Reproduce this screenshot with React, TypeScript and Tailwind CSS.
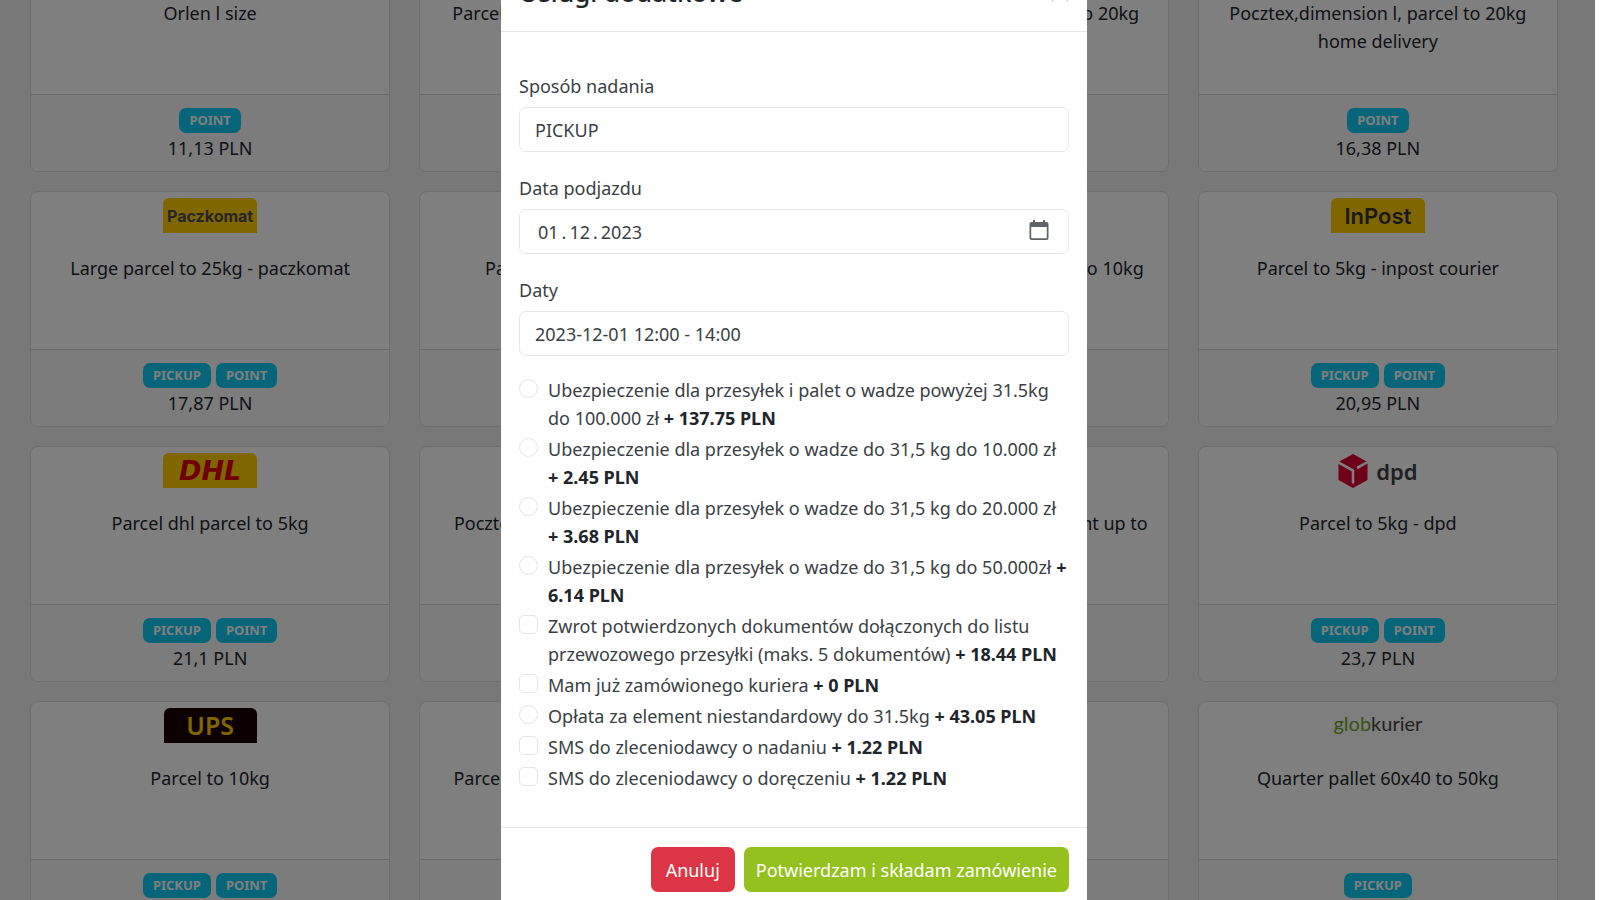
import { useState } from "react";
import type { ReactNode } from "react";

type Offer = {
  logo: ReactNode;
  name: string;
  badges: string[];
  price: string;
};

type Service = {
  id: string;
  type: "radio" | "checkbox";
  label: string;
  price: string;
};

const yellowLogo =
  "flex h-[35px] w-[94px] items-center justify-center rounded-t-md bg-[#ffcc00] whitespace-nowrap";

const PaczkomatLogo = () => (
  <div className={yellowLogo}>
    <span className="font-['Inter',sans-serif] text-[16px] leading-[34px] font-bold text-[#4a4a4a]">
      Paczkomat
    </span>
  </div>
);

const InPostLogo = () => (
  <div className={yellowLogo}>
    <span className="font-['Inter',sans-serif] text-[22px] leading-[36px] font-semibold text-[#333333]">
      InPost
    </span>
  </div>
);

const DhlLogo = () => (
  <div className={yellowLogo}>
    <span className="font-['DejaVu_Sans',sans-serif] text-[27px] leading-[34px] font-bold text-[#e00000] italic">
      DHL
    </span>
  </div>
);

const UpsLogo = () => (
  <div className="flex h-[35px] w-[93px] items-center justify-center rounded-t-md bg-[#180000]">
    <span className="text-[25px] leading-[35px] font-semibold text-[#ffcc00]">UPS</span>
  </div>
);

const DpdLogo = () => (
  <div className="flex h-[35px] items-center gap-2">
    <svg width="30" height="34" viewBox="0 0 30 34">
      <path d="M15 0 29.500 8V26L15 34 0.5 26V8Z" fill="#dc0032" />
      <path d="M0 8.200 15 16.500V29.500M19 14 30 7.800" fill="none" stroke="#ffffff" strokeWidth="2.6" />
    </svg>
    <span className="text-[22px] leading-[34px] font-semibold text-[#414042]">dpd</span>
  </div>
);

const GlobkurierLogo = () => (
  <div className="flex h-[35px] w-[94px] items-start justify-center bg-[#fdfdfd]">
    <span className="font-['Lato',sans-serif] text-[20px] leading-[30px] text-[#444444]">
      <span className="text-[#6fa52c]">glob</span>kurier
    </span>
  </div>
);

const offers: Offer[] = [
  { logo: <PaczkomatLogo />, name: "Orlen l size", badges: ["POINT"], price: "11,13 PLN" },
  { logo: <DpdLogo />, name: "Parcel pickup dpd point up to 20kg", badges: ["POINT"], price: "14,15 PLN" },
  { logo: <InPostLogo />, name: "Pocztex,dimension s, parcel to 20kg", badges: ["POINT"], price: "15,38 PLN" },
  { logo: <InPostLogo />, name: "Pocztex,dimension l, parcel to 20kg home delivery", badges: ["POINT"], price: "16,38 PLN" },
  { logo: <PaczkomatLogo />, name: "Large parcel to 25kg - paczkomat", badges: ["PICKUP", "POINT"], price: "17,87 PLN" },
  { logo: <DpdLogo />, name: "Parcel to 10kg - dpd pickup", badges: ["POINT"], price: "18,45 PLN" },
  { logo: <DhlLogo />, name: "Parcel dhl pop from point up to 10kg", badges: ["POINT"], price: "19,90 PLN" },
  { logo: <InPostLogo />, name: "Parcel to 5kg - inpost courier", badges: ["PICKUP", "POINT"], price: "20,95 PLN" },
  { logo: <DhlLogo />, name: "Parcel dhl parcel to 5kg", badges: ["PICKUP", "POINT"], price: "21,1 PLN" },
  { logo: <InPostLogo />, name: "Pocztex,dimension s, parcel to 5kg", badges: ["POINT"], price: "21,9 PLN" },
  { logo: <DpdLogo />, name: "Parcel from its dpd pickup point up to 10kg", badges: ["POINT"], price: "22,5 PLN" },
  { logo: <DpdLogo />, name: "Parcel to 5kg - dpd", badges: ["PICKUP", "POINT"], price: "23,7 PLN" },
  { logo: <UpsLogo />, name: "Parcel to 10kg", badges: ["PICKUP", "POINT"], price: "24,2 PLN" },
  { logo: <InPostLogo />, name: "Parcel up to 9kg - courier standard", badges: ["POINT"], price: "25,1 PLN" },
  { logo: <UpsLogo />, name: "Parcel to 20kg", badges: ["POINT"], price: "26,4 PLN" },
  { logo: <GlobkurierLogo />, name: "Quarter pallet 60x40 to 50kg", badges: ["PICKUP"], price: "98,4 PLN" },
];

const services: Service[] = [
  { id: "ins-100", type: "radio", label: "Ubezpieczenie dla przesyłek i palet o wadze powyżej 31.5kg do 100.000 zł", price: "137.75" },
  { id: "ins-10", type: "radio", label: "Ubezpieczenie dla przesyłek o wadze do 31,5 kg do 10.000 zł", price: "2.45" },
  { id: "ins-20", type: "radio", label: "Ubezpieczenie dla przesyłek o wadze do 31,5 kg do 20.000 zł", price: "3.68" },
  { id: "ins-50", type: "radio", label: "Ubezpieczenie dla przesyłek o wadze do 31,5 kg do 50.000zł", price: "6.14" },
  { id: "rod", type: "checkbox", label: "Zwrot potwierdzonych dokumentów dołączonych do listu przewozowego przesyłki (maks. 5 dokumentów)", price: "18.44" },
  { id: "own", type: "checkbox", label: "Mam już zamówionego kuriera", price: "0" },
  { id: "nst", type: "radio", label: "Opłata za element niestandardowy do 31.5kg", price: "43.05" },
  { id: "sms-send", type: "checkbox", label: "SMS do zleceniodawcy o nadaniu", price: "1.22" },
  { id: "sms-recv", type: "checkbox", label: "SMS do zleceniodawcy o doręczeniu", price: "1.22" },
];

function OfferCard({ offer }: { offer: Offer }) {
  return (
    <article className="flex h-[236px] flex-col overflow-hidden rounded-lg border border-[#dcdcdc] bg-white text-center">
      <div className="flex flex-1 flex-col items-center gap-[21px] px-[18px] pt-[6px]">
        {offer.logo}
        <h3>{offer.name}</h3>
      </div>
      <div className="flex h-[77px] flex-col items-center border-t border-[#d5d5d5] bg-[#f9f9f9] pt-[13px]">
        <div className="flex gap-[5px]">
          {offer.badges.map((badge) => (
            <span
              key={badge}
              className="rounded-[7px] bg-[#0dcaf0] px-[10px] text-[13px] leading-[25px] font-bold text-white"
            >
              {badge}
            </span>
          ))}
        </div>
        <p className="pt-px">{offer.price}</p>
      </div>
    </article>
  );
}

const fieldClass =
  "h-[45px] w-full appearance-none rounded-[7px] border border-[#e5e8eb] bg-white px-[15px] text-[#3a3f44] outline-none";

function Field({ id, label, children }: { id: string; label: string; children: ReactNode }) {
  return (
    <div className="flex flex-col gap-[7px]">
      <label htmlFor={id}>{label}</label>
      {children}
    </div>
  );
}

function ServicesModal() {
  const [date, setDate] = useState("01\u2009.\u200912\u2009.\u20092023");

  return (
    <section
      role="dialog"
      aria-labelledby="modal-title"
      className="-mt-[47px] h-max w-[586px] shrink-0 rounded-lg bg-white text-[#3a3f44]"
    >
      <header className="flex items-center justify-between border-b border-[#e5e8eb] p-[18px]">
        <h2 id="modal-title" className="text-[26px] leading-[42px] font-medium text-[#212529]">
          Usługi dodatkowe
        </h2>
        <button type="button" aria-label="Zamknij" className="text-[#808080]">
          <svg width="18" height="18" viewBox="0 0 20 20" stroke="currentColor" strokeWidth="2">
            <path d="M1 1 19 19M19 1 1 19" />
          </svg>
        </button>
      </header>

      <div className="px-[18px] pt-10 pb-[35px]">
        <div className="flex flex-col gap-[22px]">
          <Field id="method" label="Sposób nadania">
            <select id="method" className={fieldClass}>
              <option>PICKUP</option>
            </select>
          </Field>
          <Field id="date" label="Data podjazdu">
            <div className="relative">
              <input
                id="date"
                value={date}
                onChange={(e) => setDate(e.target.value)}
                className={`${fieldClass} pl-[18px]`}
              />
              <button
                type="button"
                aria-label="Wybierz datę"
                className="absolute top-[11px] right-5 text-[#606468]"
              >
                <svg width="20" height="20" viewBox="0 0 20 20" fill="currentColor">
                  <path
                    fillRule="evenodd"
                    d="M4 0h2v2h8V0h2v2h1.500A2 2 0 0 1 19.500 4v14a2 2 0 0 1-2 2h-15a2 2 0 0 1-2-2V4a2 2 0 0 1 2-2H4ZM2.200 7v10.500a.8.8 0 0 0 .8.8h14a.8.8 0 0 0 .8-.8V7Z"
                  />
                </svg>
              </button>
            </div>
          </Field>
          <Field id="hours" label="Daty">
            <select id="hours" className={fieldClass}>
              <option>2023-12-01 12:00 - 14:00</option>
            </select>
          </Field>
        </div>

        <ul className="flex flex-col gap-[3px] pt-5">
          {services.map((s) => (
            <li key={s.id} className="flex gap-[10px]">
              <input
                id={s.id}
                type={s.type}
                name={s.type === "radio" ? "service" : s.id}
                className={`mt-[3px] size-[19px] shrink-0 appearance-none border border-[#e2e5e9] bg-white ${
                  s.type === "radio" ? "rounded-full" : "rounded-[5px]"
                }`}
              />
              <label htmlFor={s.id}>
                {s.label} <b className="text-[#212529]">+ {s.price} PLN</b>
              </label>
            </li>
          ))}
        </ul>
      </div>

      <footer className="flex justify-end gap-[9px] border-t border-[#e5e8eb] px-[18px] py-[19px] text-white">
        <button type="button" className="h-[45px] rounded-[7px] bg-[#dc3545] px-[15px]">
          Anuluj
        </button>
        <button type="button" className="h-[45px] rounded-[7px] bg-[#95c11f] px-3">
          Potwierdzam i składam zamówienie
        </button>
      </footer>
    </section>
  );
}

export default function App() {
  return (
    <div className="relative h-screen overflow-hidden bg-white pr-[5px] font-['Noto_Sans',sans-serif] text-[18px] leading-[28px] text-[#212529]">
      <main className="h-full overflow-hidden bg-[#f0f0f0] pr-[37px] pl-[30px]">
        <div className="-mt-[64px] grid grid-cols-4 gap-x-[29px] gap-y-[19px]">
          {offers.map((offer, i) => (
            <OfferCard key={i} offer={offer} />
          ))}
        </div>
      </main>

      <div className="absolute inset-y-0 right-[5px] left-0 flex justify-center overflow-hidden bg-black/50 pr-[7px]">
        <ServicesModal />
      </div>
    </div>
  );
}
